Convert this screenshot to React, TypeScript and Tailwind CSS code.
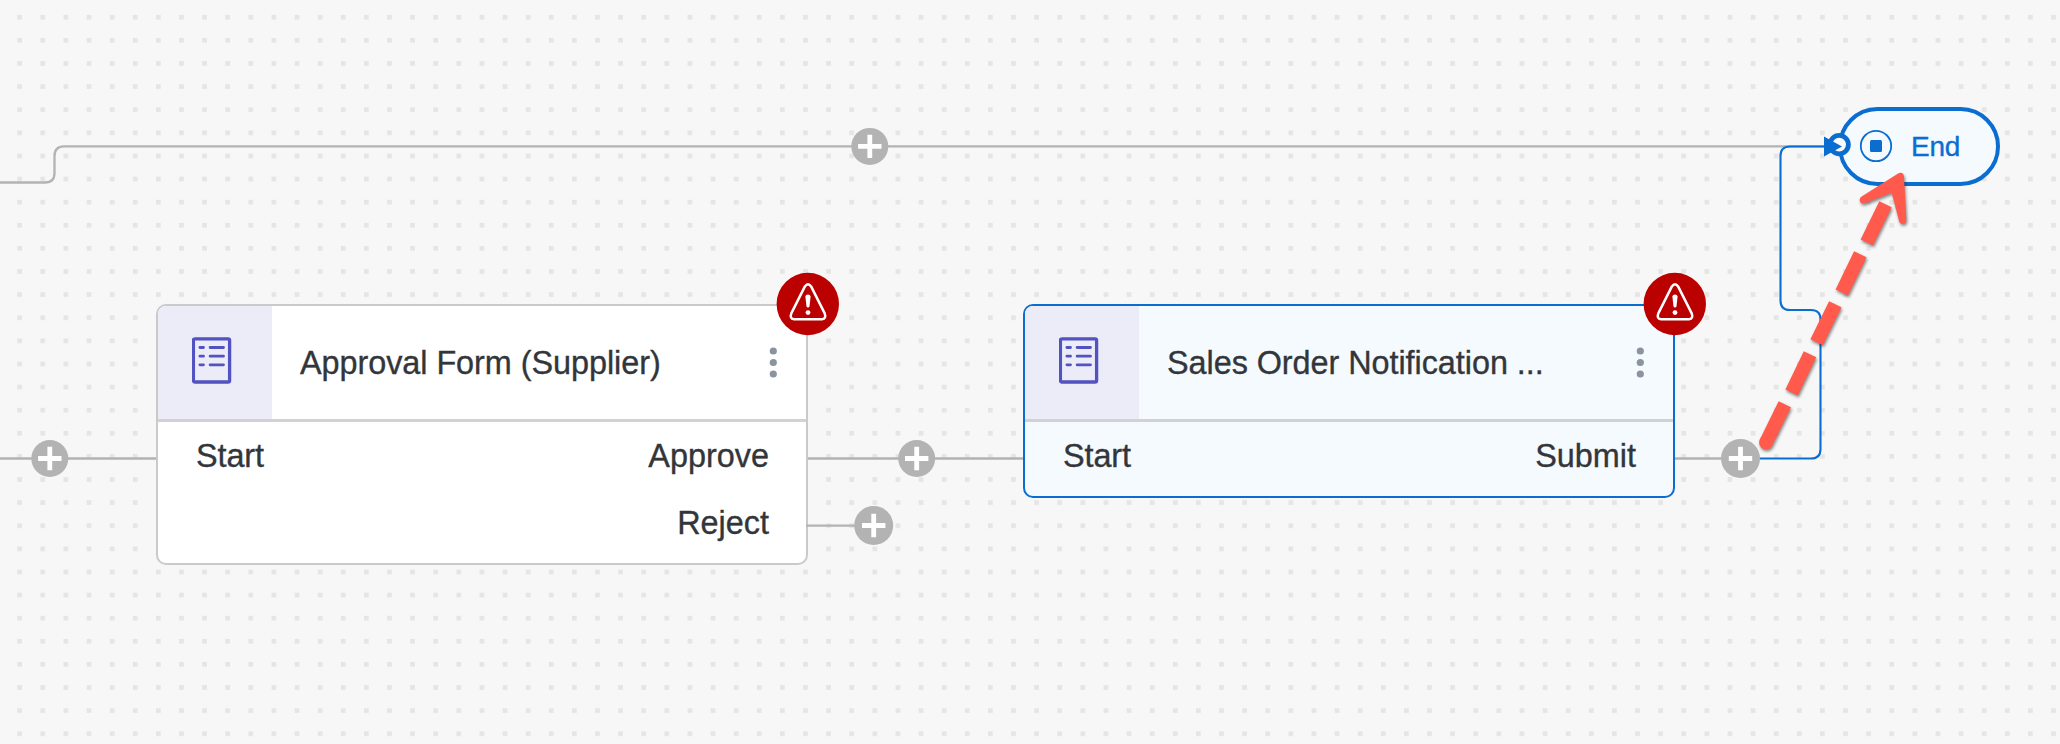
import React from "react";

function FormIcon() {
  return (
    <svg width="40" height="48" viewBox="0 0 40 48" fill="none" stroke="#5252c0" strokeLinecap="round" className="block">
      <rect x="1.4" y="1.8" width="36.2" height="43.2" rx="1.6" strokeWidth="3.3" />
      <path d="M7.9 10.5h3.6M18.1 10.5h13.4M7.9 19.2h3.6M18.1 19.2h13.4M7.9 27.8h3.6M18.1 27.8h13.4" strokeWidth="2.8" />
    </svg>
  );
}

function ErrorBadge() {
  return (
    <svg width="64" height="64" viewBox="0 0 64 64" className="absolute -top-[34px] -right-[34px]">
      <circle cx="31.8" cy="32" r="31.2" fill="#bb0000" />
      <path
        d="M28.9 14.4Q32 10.2 35.1 14.4L48.7 41.4Q50.6 46.7 46 47.2H18Q13.4 46.7 15.3 41.4Z"
        fill="none"
        stroke="#fff"
        strokeWidth="2.5"
        strokeLinejoin="round"
      />
      <path d="M29.4 24.4Q29.6 22.4 32 22.4T34.6 24.4L33.5 34.6Q33.2 35.6 32 35.6T30.5 34.6Z" fill="#fff" />
      <circle cx="32" cy="40.6" r="2.4" fill="#fff" />
    </svg>
  );
}

function StepCard({
  title,
  outputs,
  selected,
  className,
}: {
  title: string;
  outputs: string[];
  selected?: boolean;
  className: string;
}) {
  const line = selected ? "border-[#0a6ed1]" : "border-[#cacaca]";
  const fill = selected ? "bg-[#f5faff]" : "bg-white";
  return (
    <section className={`absolute flex flex-col rounded-[10px] border-2 ${line} ${fill} ${className}`}>
      <header className="box-content flex h-[113px] flex-none border-b-[3px] border-[#d2d2d2]">
        <div className="w-[114px] rounded-tl-[8px] bg-[#ecebf8] pl-[34px] pt-[31px]">
          <FormIcon />
        </div>
        <h2 className="flex-1 whitespace-pre pl-[28px] leading-[114px] tracking-[-0.05px]">{title}</h2>
        <svg width="8" height="113" className="mr-[29px]" fill="#8a939e">
          <circle cx="4.3" cy="45" r="3.6" />
          <circle cx="4.3" cy="56.5" r="3.6" />
          <circle cx="4.3" cy="68" r="3.6" />
        </svg>
      </header>
      <div className="flex justify-between px-[37px] pt-px">
        <span className="pl-px leading-[67px] tracking-[-0.1px]">Start</span>
        <div className="flex flex-col items-end leading-[67px]">
          {outputs.map((o) => (
            <span key={o}>{o}</span>
          ))}
        </div>
      </div>
      <ErrorBadge />
    </section>
  );
}

function Plus({ x, y, r }: { x: number; y: number; r: number }) {
  return (
    <g>
      <circle cx={x} cy={y} r={r} fill="#b3b3b3" />
      <path d={`M${x - 11.7} ${y}h23.4M${x} ${y - 11.7}v23.4`} stroke="#fff" strokeWidth="4.8" />
    </g>
  );
}

export default function App() {
  return (
    <main className="relative h-[744px] w-[2060px] overflow-hidden bg-[#f7f7f7] font-['Liberation_Sans',Arial,sans-serif] text-[32.4px] text-[#32363a] [-webkit-text-stroke:0.35px_currentColor]">
      <svg width="2060" height="744" className="absolute inset-0" fill="none">
        <defs>
          <pattern id="grid" x="17.3" y="14.9" width="23.112" height="23.112" patternUnits="userSpaceOnUse">
            <rect width="4.7" height="4.7" fill="#e5e5e5" />
          </pattern>
        </defs>
        <rect width="2060" height="744" fill="url(#grid)" />
        <g stroke="#b3b3b3" strokeWidth="2.3">
          <path d="M0 182.5H45Q54.5 182.5 54.5 173V156Q54.5 146.3 64 146.3H1830" />
          <path d="M0 458.5H157M808 458.5H1024M1674 458.5H1740" />
        </g>
        <path
          d="M1740 458.5H1811Q1820.5 458.5 1820.5 449V319.5Q1820.5 310 1811 310H1790Q1780.5 310 1780.5 300.5V156Q1780.5 146.5 1790 146.5H1830"
          stroke="#0a6ed1"
          strokeWidth="2.1"
        />
        <Plus x={49.8} y={458.5} r={18.5} />
        <Plus x={869.8} y={146.4} r={18.5} />
        <Plus x={916.7} y={458.5} r={18.5} />
        <Plus x={1740.5} y={458.5} r={19.5} />
      </svg>

      <StepCard title="Approval Form (Supplier)" outputs={["Approve", "Reject"]} className="left-[156px] top-[304px] h-[261px] w-[652px]" />
      <StepCard title="Sales Order Notification ..." outputs={["Submit"]} selected className="left-[1023px] top-[304px] h-[194px] w-[652px]" />

      <div className="absolute left-[1838px] top-[107px] flex h-[79px] w-[162px] items-center rounded-full border-4 border-[#0a6ed1] bg-[#f5faff] text-[#0a6ed1]">
        <svg width="34" height="34" viewBox="0 0 34 34" className="mb-px ml-[17px] mr-[18px]">
          <circle cx="17" cy="17" r="15.2" fill="none" stroke="#0a6ed1" strokeWidth="1.8" />
          <rect x="11" y="11" width="12" height="12" rx="1.5" fill="#0a6ed1" />
        </svg>
        <span className="text-[28px] tracking-[-0.3px]">End</span>
      </div>

      <svg width="2060" height="744" className="absolute inset-0" fill="none">
        <path d="M806 525.7H870" stroke="#b3b3b3" strokeWidth="2.2" />
        <Plus x={873.7} y={525.5} r={19.5} />
        <circle cx="1839.2" cy="144.6" r="9.2" fill="#f9fbfd" stroke="#0a6ed1" strokeWidth="4.8" />
        <path d="M1824 136.5L1842 146.5L1824 156.5Z" fill="#0a6ed1" />
        <g style={{ filter: "drop-shadow(1px 2px 1.5px rgba(0,0,0,0.45))" }}>
          <path
            d="M1885.5 204.3L1866.8 242.5M1860.3 254.3L1841.8 292.5M1835.3 304.3L1816.6 342.3M1810 354.3L1791.6 392.5M1784.8 404.3L1766 442.5"
            stroke="#ff5a4c"
            strokeWidth="13.8"
          />
          <circle cx="1766" cy="442.5" r="6.9" fill="#ff5a4c" />
          <path
            d="M1898.5 173.2Q1903.5 171.5 1904 177L1906.3 219Q1906.5 223.5 1903 223.9Q1899.5 224 1898.8 220L1891.7 192.7L1864.5 203.3Q1861 204.5 1859.8 201Q1859 198 1862 196.3Z"
            fill="#ff5a4c"
          />
        </g>
      </svg>
    </main>
  );
}
